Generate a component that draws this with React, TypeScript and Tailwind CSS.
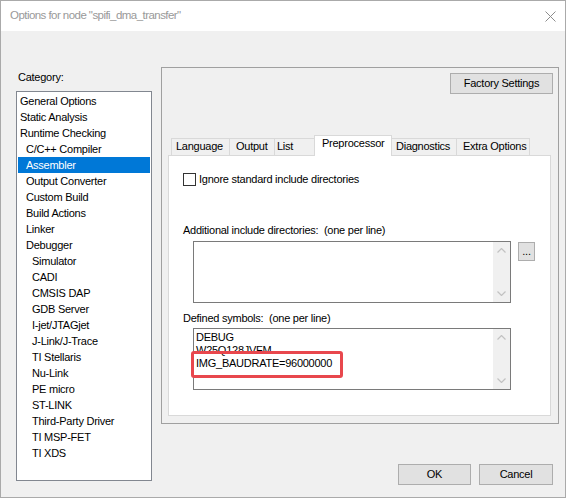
const CATEGORIES: { label: string; level: number }[] = [
  { label: 'General Options', level: 0 },
  { label: 'Static Analysis', level: 0 },
  { label: 'Runtime Checking', level: 0 },
  { label: 'C/C++ Compiler', level: 1 },
  { label: 'Assembler', level: 1 },
  { label: 'Output Converter', level: 1 },
  { label: 'Custom Build', level: 1 },
  { label: 'Build Actions', level: 1 },
  { label: 'Linker', level: 1 },
  { label: 'Debugger', level: 1 },
  { label: 'Simulator', level: 2 },
  { label: 'CADI', level: 2 },
  { label: 'CMSIS DAP', level: 2 },
  { label: 'GDB Server', level: 2 },
  { label: 'I-jet/JTAGjet', level: 2 },
  { label: 'J-Link/J-Trace', level: 2 },
  { label: 'TI Stellaris', level: 2 },
  { label: 'Nu-Link', level: 2 },
  { label: 'PE micro', level: 2 },
  { label: 'ST-LINK', level: 2 },
  { label: 'Third-Party Driver', level: 2 },
  { label: 'TI MSP-FET', level: 2 },
  { label: 'TI XDS', level: 2 },
];

const TABS = [
  { label: 'Language', width: 'w-[59px]', pad: 'pl-[4px]' },
  { label: 'Output', width: 'w-[46px]', pad: 'pl-[6px]' },
  { label: 'List', width: 'w-[41px]', pad: 'pl-[2px]' },
  { label: 'Preprocessor', width: 'w-[78px]', pad: 'pl-[7px]', active: true },
  { label: 'Diagnostics', width: 'w-[66px]', pad: 'pl-[4px]' },
  { label: 'Extra Options', width: 'w-[74px]', pad: 'pl-[6px]' },
];

const indent = ['pl-[2px]', 'pl-[8px]', 'pl-[14px]'];

const Chevron = ({ up }: { up?: boolean }) => (
  <svg width="9" height="5" viewBox="0 0 9 5" className="block">
    <polyline
      points={up ? '0.5,4.5 4.5,0.5 8.5,4.5' : '0.5,0.5 4.5,4.5 8.5,0.5'}
      fill="none"
      stroke="#c2c2c2"
      strokeWidth="1.2"
    />
  </svg>
);

const ScrollBar = () => (
  <div className="w-[17px] h-full bg-[#f0f0f0] flex flex-col justify-between items-center py-[6px]">
    <Chevron up />
    <Chevron />
  </div>
);

const TextBox = ({ lines }: { lines: string[] }) => (
  <div className="relative w-[318px] h-[62px] border border-[#7a7a7a] bg-white flex">
    <div className="flex-1 pl-[2px] pt-[2px] leading-[13px] overflow-hidden">
      {lines.map((l) => (
        <div key={l}>{l}</div>
      ))}
    </div>
    <ScrollBar />
  </div>
);

export default function App() {
  return (
    <div className="w-[566px] h-[498px] bg-[#f0f0f0] border border-[#aaaaaa] flex flex-col overflow-hidden font-['Liberation_Sans',Arial,sans-serif] text-[11px] tracking-[-0.25px] text-black">
      <div className="h-[30px] shrink-0 bg-white flex items-center justify-between pl-[9px] pr-[9px]">
        <span className="text-[11.5px] tracking-[-0.55px] text-[#999999]">
          Options for node "spifi_dma_transfer"
        </span>
        <svg width="11" height="11" viewBox="0 0 11 11" className="mt-[1px]">
          <path d="M0.5 0.5 L10.5 10.5 M10.5 0.5 L0.5 10.5" stroke="#8c8c8c" strokeWidth="1" />
        </svg>
      </div>

      <div className="flex pl-[15px] pt-[36px]">
        <div className="w-[136px] flex flex-col">
          <div className="mt-[4px] ml-[2px] leading-[13px]">Category:</div>
          <div className="mt-[7px] h-[390px] border border-[#828790] bg-white px-[1px] pt-[1px]">
            {CATEGORIES.map((c) => (
              <div
                key={c.label}
                className={`h-[16px] leading-[16px] whitespace-nowrap ${indent[c.level]} ${
                  c.label === 'Assembler' ? 'bg-[#0078d7] text-white' : ''
                }`}
              >
                {c.label}
              </div>
            ))}
          </div>
        </div>

        <div className="ml-[9px] flex flex-col">
          <div className="w-[398px] h-[357px] border border-[#a0a0a0] flex flex-col">
            <div className="flex justify-end pt-[5px] pr-[5px]">
              <button className="w-[103px] h-[21px] bg-[#e1e1e1] border border-[#adadad] leading-[13px]">
                Factory Settings
              </button>
            </div>

            <div className="ml-[6px] mt-[41px] w-[383px]">
              <div className="flex items-end pl-[3px]">
                {TABS.map((t, i) => (
                  <div
                    key={t.label}
                    className={`${t.width} ${t.pad} ${i > 0 ? '-ml-px' : ''} border-l border-t border-r border-[#d9d9d9] leading-[13px] whitespace-nowrap ${
                      t.active
                        ? 'relative z-10 h-[21px] -mb-px bg-white pt-[1px]'
                        : 'h-[17px] bg-[#f0f0f0] pt-[1px]'
                    }`}
                  >
                    {t.label}
                  </div>
                ))}
              </div>

              <div className="h-[261px] border border-[#d9d9d9] bg-white pl-[14px] flex flex-col">
                <div className="mt-[17px] flex items-start">
                  <div className="w-[13px] h-[13px] border border-[#333333] bg-white" />
                  <span className="ml-[3px] leading-[13px]">Ignore standard include directories</span>
                </div>

                <div className="mt-[38px] leading-[13px] whitespace-pre">
                  Additional include directories:  (one per line)
                </div>
                <div className="mt-[4px] ml-[10px] flex items-start">
                  <TextBox lines={[]} />
                  <button className="ml-[7px] mt-[1px] w-[17px] h-[19px] bg-[#e1e1e1] border border-[#adadad] leading-[13px] text-[11px]">
                    ...
                  </button>
                </div>

                <div className="mt-[9px] leading-[13px] whitespace-pre">Defined symbols:  (one per line)</div>
                <div className="mt-[3px] ml-[10px] relative">
                  <TextBox lines={['DEBUG', 'W25Q128JVFM', 'IMG_BAUDRATE=96000000']} />
                  <div className="absolute left-[-2px] top-[23px] w-[152px] h-[27px] border-[3px] border-[#e8474d] rounded-[3px]" />
                </div>
              </div>
            </div>
          </div>

          <div className="mt-[40px] flex justify-end gap-[8px] pr-[6px]">
            <button className="w-[73px] h-[21px] bg-[#e1e1e1] border border-[#adadad] leading-[13px]">OK</button>
            <button className="w-[74px] h-[21px] bg-[#e1e1e1] border border-[#adadad] leading-[13px]">Cancel</button>
          </div>
        </div>
      </div>
    </div>
  );
}
